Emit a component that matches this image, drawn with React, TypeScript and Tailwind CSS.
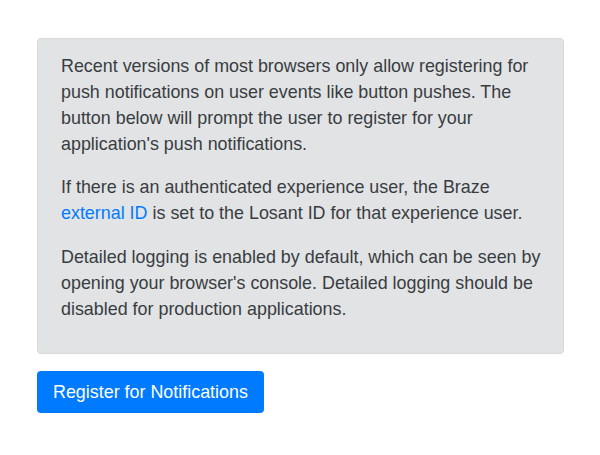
import React from 'react';

const App: React.FC = () => {
  return (
    <div className="min-h-screen bg-white pt-[38px] pl-[37px] font-['Liberation_Sans',sans-serif] text-[17.9px] leading-[26px]">
      <div className="w-[527px] rounded-[4px] border border-[#d6d8db] bg-[#e2e3e5] pl-[23px] pr-[18px] pt-[14px] pb-[14px] text-[#383d41]">
        <p className="mb-[17px]">
          Recent versions of most browsers only allow registering for push notifications on user events like button
          pushes. The button below will prompt the user to register for your application's push notifications.
        </p>
        <p className="mb-[18px]">
          If there is an authenticated experience user, the Braze{' '}
          <a href="#" className="text-[#007bff]">
            external ID
          </a>{' '}
          is set to the Losant ID for that experience user.
        </p>
        <p className="mb-[17px]">
          Detailed logging is enabled by default, which can be seen by opening your browser's console. Detailed
          logging should be disabled for production applications.
        </p>
      </div>
      <button className="mt-[17px] h-[42px] rounded-[4px] bg-[#007bff] px-[16px] text-white">
        Register for Notifications
      </button>
    </div>
  );
};

export default App;
